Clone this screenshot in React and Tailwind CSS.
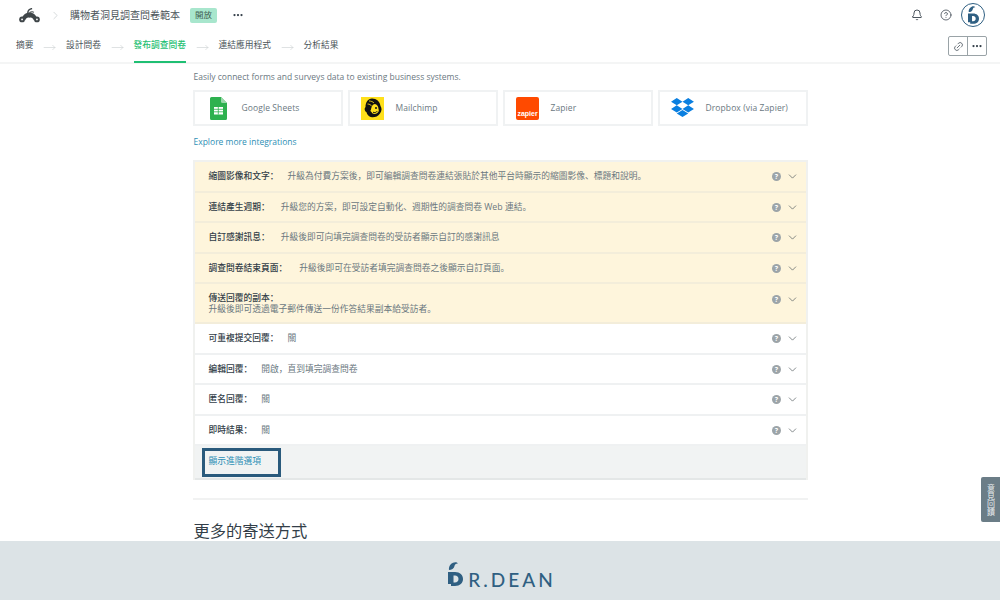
import { Bell, ChevronDown, ChevronRight, CircleHelp, Link2, MoveRight, Ellipsis } from 'lucide-react';

const cjk = "font-['Open_Sans','Noto_Sans_CJK_SC',sans-serif]";

const tabs = ['摘要', '設計問卷', '發布調查問卷', '連結應用程式', '分析結果'];

const upgradeRows = [
  { label: '縮圖影像和文字：', text: '升級為付費方案後，即可編輯調查問卷連結張貼於其他平台時顯示的縮圖影像、標題和說明。', gap: 'ml-[9px]', h: 'h-[31px]' },
  { label: '連結產生週期：', text: '升級您的方案，即可設定自動化、週期性的調查問卷 Web 連結。', gap: 'ml-[11px]', h: 'h-[30px]' },
  { label: '自訂感謝訊息：', text: '升級後即可向填完調查問卷的受訪者顯示自訂的感謝訊息', gap: 'ml-[11px]', h: 'h-[31px]' },
  { label: '調查問卷結束頁面：', text: '升級後即可在受訪者填完調查問卷之後顯示自訂頁面。', gap: 'ml-[12px]', h: 'h-[30px]' },
];

const settingRows = [
  { label: '可重複提交回覆：', text: '關', gap: 'ml-[9px]', h: 'h-[31px]' },
  { label: '編輯回覆：', text: '開啟，直到填完調查問卷', gap: 'ml-[9px]', h: 'h-[30px]' },
  { label: '匿名回覆：', text: '關', gap: 'ml-[9px]', h: 'h-[31px]' },
  { label: '即時結果：', text: '關', gap: 'ml-[9px]', h: 'h-[30px]' },
];

function MonkeyLogo() {
  return (
    <svg viewBox="0 0 24 17" className="h-[15px] w-[21px]" fill="#3f4649">
      <path d="M3 13C4 8 8 5 12 5s8 3 9 8l-4 1c-1-2.500-3-4-5-3-2-1-4 .5-5 3z" />
      <path d="M10 6c0-3 2-5 5-5.500" fill="none" stroke="#3f4649" strokeWidth="1.500" />
      <path d="M12 5c2-1 4-1 5 0" fill="none" stroke="#3f4649" strokeWidth="1.200" />
      <circle cx="3.500" cy="13" r="3.300" />
      <circle cx="20.500" cy="13" r="3.300" />
      <circle cx="3.500" cy="13" r="1" fill="#fff" />
      <circle cx="20.500" cy="13" r="1" fill="#fff" />
    </svg>
  );
}

function SheetsIcon() {
  return (
    <svg viewBox="0 0 17 23" className="h-[23px] w-[17px]">
      <path d="M1.500 0H11l6 6v15.500a1.500 1.500 0 0 1-1.500 1.500h-14A1.500 1.500 0 0 1 0 21.500v-20A1.500 1.500 0 0 1 1.500 0z" fill="#2eb14f" />
      <path d="M11 0l6 6h-4.500A1.500 1.500 0 0 1 11 4.500z" fill="#9bd9ab" />
      <path d="M4 10h9v7.500H4z" fill="#fff" />
      <path d="M4 12.300h9M4 14.800h9M8.300 10v7.500" stroke="#2eb14f" strokeWidth=".8" />
    </svg>
  );
}

function MailchimpIcon() {
  return (
    <div className="flex h-[23px] w-[23px] items-center justify-center bg-[#ffe01b]">
      <svg viewBox="0 0 20 20" className="h-[20px] w-[20px]">
        <path d="M9 .5c4.500 0 8 3 8.500 7.500 1.500 2 1.500 5-.5 7.500-2 3-5 4-8 3.800-3-.3-5-2.500-5.500-5C1.500 13 1 10.500 2.500 9 2.500 4.500 5 .5 9 .5z" fill="#111" />
        <path d="M12 6c2.500.5 3.500 3 3.500 5 .8 1.500.2 3.500-2 4.500-2 1-4.500.3-5-1.500-1-.3-1.500-1.500-.5-2.500C8.500 9 9.500 6 12 6z" fill="#ffe01b" />
        <path d="M6 3c2 0 4 .8 5 2M4.500 6c2 0 3.500 1 4.500 2.500" stroke="#ffe01b" strokeWidth=".8" fill="none" />
        <circle cx="13" cy="10" r="1" fill="#111" />
        <path d="M10 14.200c1.500.8 3.300.3 4.200-1" stroke="#111" strokeWidth="1" fill="none" />
      </svg>
    </div>
  );
}

function ZapierIcon() {
  return (
    <div className="flex h-[23px] w-[23px] items-end justify-center rounded-[2px] bg-[#ff4a00] pb-[2px]">
      <span className="font-['Liberation_Sans',sans-serif] text-[7px] font-bold leading-[8px] text-white">zapier</span>
    </div>
  );
}

function DropboxIcon() {
  return (
    <svg viewBox="0 0 24 22" className="h-[21px] w-[23px]" fill="#0a7fe0">
      <path d="M6 0l6 3.800-6 3.800-6-3.800zM18 0l6 3.800-6 3.800-6-3.800zM0 11.400l6-3.800 6 3.800-6 3.800zM18 7.600l6 3.800-6 3.800-6-3.800zM6 16.300l6-3.800 6 3.800-6 3.700z" />
    </svg>
  );
}

function Integration({ icon, name, iconBox }) {
  return (
    <div className="flex h-[36px] w-[150px] items-center border-2 border-[#f0f2f3] bg-white">
      <div className={`flex shrink-0 justify-center ${iconBox}`}>{icon}</div>
      <span className="text-[8.500px] tracking-[0.1px] text-[#6b787f]">{name}</span>
    </div>
  );
}

function RowIcons() {
  return (
    <div className="ml-auto flex items-center gap-[5px]">
      <span className="flex h-[9px] w-[9px] items-center justify-center rounded-full bg-[#9ca4a8] text-[7px] font-bold leading-none text-white">?</span>
      <ChevronDown className="h-[13px] w-[13px] text-[#4b5459]" strokeWidth={1.25} />
    </div>
  );
}

function Row({ label, text, gap, h, bg }) {
  return (
    <div className={`flex items-center border-b-2 pl-[14px] pr-[6.500px] ${h} ${bg}`}>
      <span className="text-[8.750px] font-medium leading-[13px] text-[#333e48]">{label}</span>
      <span className={`text-[8.750px] leading-[13px] text-[#6b787f] ${gap}`}>{text}</span>
      <RowIcons />
    </div>
  );
}

function DrDeanMark({ className }) {
  return (
    <svg viewBox="0 0 15 24" className={className} fill="#2f5f82">
      <path d="M1 8c-.5-3 1-6 4-7.300 2-.9 4-.7 5 .8-2-.2-3.200 1-3.500 2.500C6 6.500 3.500 8 1 8z" />
      <path fillRule="evenodd" d="M0 10h7c5 0 8 3 8 7s-3 7-8 7H3v-2H0zM5.500 13.500v7h1.500c2 0 3.500-1.500 3.500-3.500s-1.500-3.500-3.500-3.500z" />
    </svg>
  );
}

export default function App() {
  return (
    <div className={`relative flex h-[600px] w-[1000px] flex-col overflow-hidden bg-white ${cjk}`}>
      <header className="h-[64px] shrink-0 border-b-2 border-[#f4f5f5]">
        <div className="flex h-[31px] items-center pb-[1px] pl-[19px] pr-[15px]">
          <MonkeyLogo />
          <ChevronRight className="ml-[9px] h-[13px] w-[13px] text-[#c4c9cb]" strokeWidth={1.25} />
          <span className="ml-[8px] text-[10px] text-[#4b5459]">購物者洞見調查問卷範本</span>
          <span className="ml-[10px] flex h-[15px] w-[27px] items-center justify-center rounded-[2px] bg-[#a8e6cd] text-[8.500px] text-[#3f5d52]">開放</span>
          <Ellipsis className="ml-[15px] h-[12px] w-[12px] text-[#333e48]" strokeWidth={2.5} />
          <Bell className="ml-auto h-[12px] w-[12px] text-[#333e48]" strokeWidth={1.75} />
          <CircleHelp className="ml-[17px] h-[12px] w-[12px] text-[#333e48]" strokeWidth={1.5} />
          <div className="ml-[9px] flex h-[24px] w-[24px] items-center justify-center rounded-full border border-[#2f5f82] bg-white">
            <DrDeanMark className="h-[18px] w-[11px]" />
          </div>
        </div>
        <div className="flex h-[32px] items-stretch pl-[16px] pr-[13px]">
          {tabs.map((tab, i) => (
            <div key={tab} className="flex items-stretch">
              <span className={`flex items-center text-[8.750px] ${i === 2 ? 'border-b-2 border-[#1fbf73] font-medium text-[#1fbf73]' : 'border-b-2 border-transparent text-[#4b5459]'}`}>{tab}</span>
              {i < tabs.length - 1 && (
                <span className="flex w-[32.500px] items-center justify-center">
                  <MoveRight className="h-[13px] w-[13px] text-[#c4c9cb]" strokeWidth={1} />
                </span>
              )}
            </div>
          ))}
          <div className="ml-auto mt-[5px] flex h-[20px] w-[39px] overflow-hidden rounded-[2px] border border-[#9aa3a7]">
            <span className="flex w-[19px] items-center justify-center border-r border-[#9aa3a7]">
              <Link2 className="h-[11px] w-[11px] -rotate-45 text-[#333e48]" strokeWidth={1.5} />
            </span>
            <span className="flex flex-1 items-center justify-center">
              <Ellipsis className="h-[12px] w-[12px] text-[#333e48]" strokeWidth={2.5} />
            </span>
          </div>
        </div>
      </header>

      <main className="min-h-0 flex-1 overflow-hidden">
        <div className="mx-auto w-[615px]">
          <p className="mt-[6px] h-[13px] pl-[1px] text-[8.500px] leading-[13px] text-[#6b787f]">Easily connect forms and surveys data to existing business systems.</p>
          <div className="mt-[7px] flex gap-[5px]">
            <Integration icon={<SheetsIcon />} name="Google Sheets" iconBox="w-[47px]" />
            <Integration icon={<MailchimpIcon />} name="Mailchimp" iconBox="w-[46px]" />
            <Integration icon={<ZapierIcon />} name="Zapier" iconBox="w-[46px]" />
            <Integration icon={<DropboxIcon />} name="Dropbox (via Zapier)" iconBox="w-[46px]" />
          </div>
          <a className="mt-[9px] block h-[13px] pl-[1px] text-[8.500px] leading-[13px] text-[#2d8fb5]">Explore more integrations</a>

          <div className="mt-[12px] border-x-2 border-t-2 border-[#f0f1ef]">
            {upgradeRows.map((r) => (
              <Row key={r.label} {...r} bg="bg-[#fef5dc] border-[#f3edda]" />
            ))}
            <div className="flex h-[40px] items-start border-b-2 border-[#f3edda] bg-[#fef5dc] pl-[14px] pr-[6.500px] pt-[9px]">
              <div className="text-[8.750px] leading-[11px]">
                <div className="font-medium text-[#333e48]">傳送回覆的副本：</div>
                <div className="text-[#6b787f]">升級後即可透過電子郵件傳送一份作答結果副本給受訪者。</div>
              </div>
              <RowIcons />
            </div>
            {settingRows.map((r) => (
              <Row key={r.label} {...r} bg="bg-white border-[#eff1f2]" />
            ))}
            <div className="flex h-[34px] items-center border-b-2 border-[#e4e7e7] bg-[#f1f3f3] pl-[7px]">
              <div className="flex h-[29px] w-[79px] items-center border-[3px] border-[#2a5a7c] pl-[4px] text-[8.750px] text-[#2d8fb5]">顯示進階選項</div>
            </div>
          </div>

          <div className="mt-[18px] h-[2px] bg-[#f1f2f2]" />
          <h2 className="mt-[20px] pl-[1px] text-[16.250px] leading-[22px] text-[#333e48]">更多的寄送方式</h2>
        </div>
      </main>

      <footer className="flex h-[59px] shrink-0 items-start justify-center bg-[#dce3e6] pl-[4px] pt-[21px]">
        <DrDeanMark className="h-[24px] w-[15px]" />
        <span className="ml-[5px] mt-[8px] font-['Lato',sans-serif] text-[19px] font-medium leading-[20px] tracking-[3px] text-[#2f5f82]">R.DEAN</span>
      </footer>

      <div className="absolute right-0 top-[477px] flex h-[45px] w-[19px] items-center justify-center rounded-l-[2px] bg-[#6b7d87] text-[8px] leading-none text-[#e6eaec] [writing-mode:vertical-rl]">
        意見回饋
      </div>
    </div>
  );
}
